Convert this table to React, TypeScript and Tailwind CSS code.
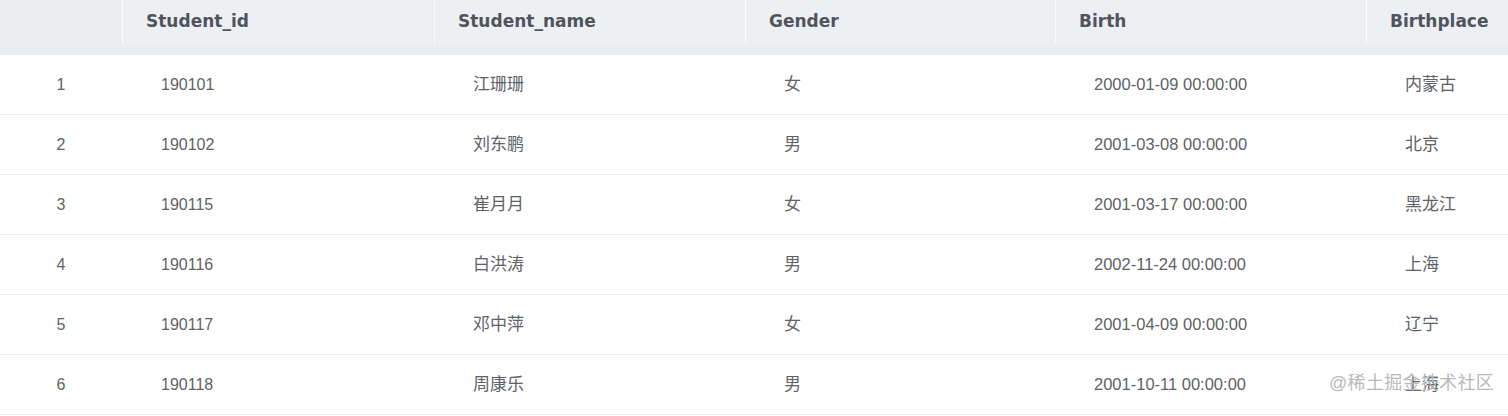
const columns = [
  { key: 'id', label: 'Student_id', width: 'w-[312px]', size: 'text-[16px]' },
  { key: 'name', label: 'Student_name', width: 'w-[311px]', size: 'text-[17px]' },
  { key: 'gender', label: 'Gender', width: 'w-[310px]', size: 'text-[17px]' },
  { key: 'birth', label: 'Birth', width: 'w-[311px]', size: 'text-[16.5px]' },
  { key: 'place', label: 'Birthplace', width: 'w-[142px]', size: 'text-[17px]' },
] as const

type Student = { id: string; name: string; gender: string; birth: string; place: string }

const students: Student[] = [
  { id: '190101', name: '江珊珊', gender: '女', birth: '2000-01-09 00:00:00', place: '内蒙古' },
  { id: '190102', name: '刘东鹏', gender: '男', birth: '2001-03-08 00:00:00', place: '北京' },
  { id: '190115', name: '崔月月', gender: '女', birth: '2001-03-17 00:00:00', place: '黑龙江' },
  { id: '190116', name: '白洪涛', gender: '男', birth: '2002-11-24 00:00:00', place: '上海' },
  { id: '190117', name: '邓中萍', gender: '女', birth: '2001-04-09 00:00:00', place: '辽宁' },
  { id: '190118', name: '周康乐', gender: '男', birth: '2001-10-11 00:00:00', place: '上海' },
]

const bodyFont = { fontFamily: '"Liberation Sans", "Noto Sans CJK SC", sans-serif' }

export default function App() {
  return (
    <div className="relative w-[1508px] h-[416px] bg-white overflow-hidden" style={bodyFont}>
      {/* header */}
      <div className="flex h-[55px] bg-[#ebeef1]">
        <div className="w-[122px] h-[43px] shrink-0" />
        {columns.map((col) => (
          <div
            key={col.key}
            className={`${col.width} shrink-0 h-[43px] flex items-center pl-[23px] border-l border-[#fbfcfd] bg-[#edf0f3] text-[17px] font-bold text-[#4f545d]`}
            style={{ fontFamily: '"DejaVu Sans", sans-serif' }}
          >
            {col.label}
          </div>
        ))}
      </div>

      {/* rows */}
      {students.map((s, i) => (
        <div key={s.id} className="flex h-[60px] items-center border-b border-[#ebeef3] text-[#606266]">
          <div className="w-[122px] shrink-0 text-center text-[16px]">{i + 1}</div>
          {columns.map((col) => (
            <div key={col.key} className={`${col.width} shrink-0 pl-[39px] ${col.size}`}>
              {s[col.key]}
            </div>
          ))}
        </div>
      ))}

      {/* watermark */}
      <div className="absolute right-[14px] bottom-[19px] text-[18px] text-[#b8b9bc] tracking-[0.3px]">
        @稀土掘金技术社区
      </div>
    </div>
  )
}
